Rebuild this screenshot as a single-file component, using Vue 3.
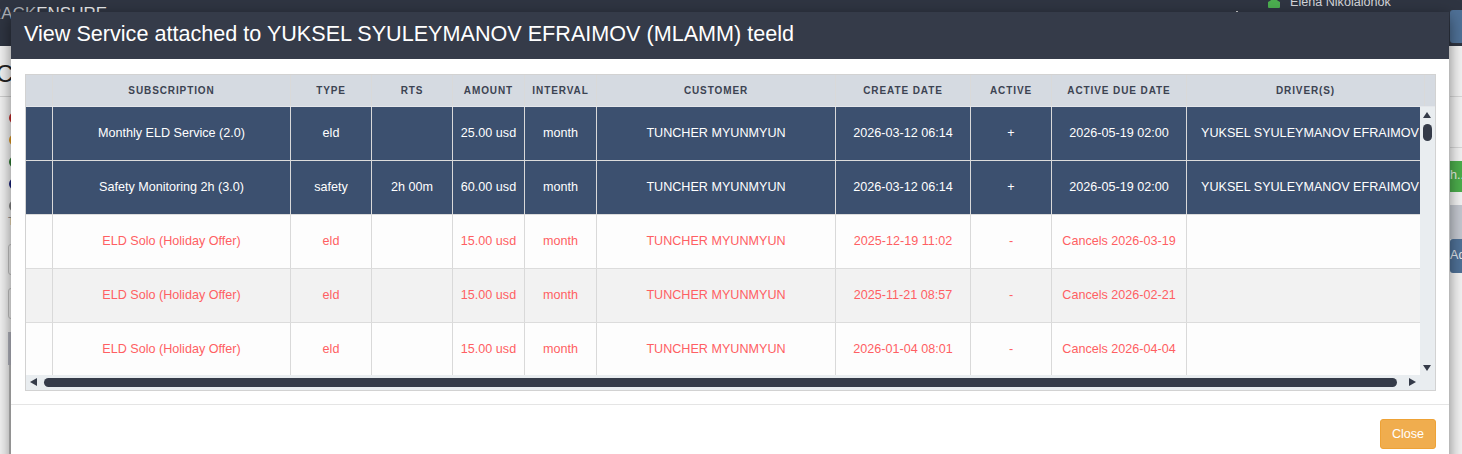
<template>
  <div class="page">
    <!-- page behind the dialog, only its edges stay visible -->
    <div class="behind">
      <div class="navbar">
        <span class="brand"><span class="brand-thin">RACK</span>ENSURE</span>
        <span class="nav-speck"></span>
        <span class="user">
          <svg class="user-icon" width="12" height="12" viewBox="0 0 12 12">
            <path d="M3.5 0h5l.8 4.5L12 6v5a1 1 0 0 1-1 1H1a1 1 0 0 1-1-1V6l2.7-1.5z" fill="#4caf50" />
          </svg>
          Elena Nikolaionok
        </span>
      </div>
      <div class="page-title">Cu</div>
      <div class="left-line"></div>
      <div class="status-dots">
        <span v-for="c in dotColors" :key="c" class="dot" :style="{ borderColor: c }"></span>
      </div>
      <div class="left-t">T</div>
      <div class="left-field left-field--a"></div>
      <div class="left-field left-field--b"></div>
      <div class="left-band"></div>
      <div class="left-rail"></div>
      <div class="side-blue side-blue--top"></div>
      <div class="side-line side-line--a"></div>
      <div class="side-line side-line--b"></div>
      <div class="side-green">h...</div>
      <div class="side-band"></div>
      <div class="side-blue side-blue--ad">Ad</div>
    </div>

    <div class="modal">
      <div class="modal-header">View Service attached to YUKSEL SYULEYMANOV EFRAIMOV (MLAMM) teeld</div>
      <div class="modal-body">
        <div class="table-wrap">
          <div class="row head">
            <div v-for="col in columns" :key="col.key" class="cell" :class="col.key">{{ col.label }}</div>
          </div>
          <div
            v-for="(item, idx) in services"
            :key="idx"
            class="row"
            :class="{ 'row--active': item.on, 'row--odd': !item.on && idx % 2 === 1 }"
          >
            <div v-for="col in columns" :key="col.key" class="cell" :class="col.key">
              <span class="cell-text">{{ item[col.key] }}</span>
            </div>
          </div>
          <div class="vbar">
            <span class="arrow arrow--up"></span>
            <span class="vthumb"></span>
            <span class="arrow arrow--down"></span>
          </div>
          <div class="hbar">
            <span class="arrow arrow--left"></span>
            <span class="hthumb"></span>
            <span class="arrow arrow--right"></span>
          </div>
        </div>
      </div>
      <div class="modal-footer">
        <button class="btn-close" type="button">Close</button>
      </div>
    </div>
  </div>
</template>

<script setup>
const dotColors = ['#c62828', '#e39a1f', '#2e7d32', '#1a237e', '#888888']

const columns = [
  { key: 'sel', label: '' },
  { key: 'sub', label: 'SUBSCRIPTION' },
  { key: 'type', label: 'TYPE' },
  { key: 'rts', label: 'RTS' },
  { key: 'amount', label: 'AMOUNT' },
  { key: 'interval', label: 'INTERVAL' },
  { key: 'customer', label: 'CUSTOMER' },
  { key: 'created', label: 'CREATE DATE' },
  { key: 'active', label: 'ACTIVE' },
  { key: 'due', label: 'ACTIVE DUE DATE' },
  { key: 'drivers', label: 'DRIVER(S)' }
]

const driver = 'YUKSEL SYULEYMANOV EFRAIMOV'
const customer = 'TUNCHER MYUNMYUN'

const services = [
  { on: true, sub: 'Monthly ELD Service (2.0)', type: 'eld', rts: '', amount: '25.00 usd', interval: 'month', customer, created: '2026-03-12 06:14', active: '+', due: '2026-05-19 02:00', drivers: driver },
  { on: true, sub: 'Safety Monitoring 2h (3.0)', type: 'safety', rts: '2h 00m', amount: '60.00 usd', interval: 'month', customer, created: '2026-03-12 06:14', active: '+', due: '2026-05-19 02:00', drivers: driver },
  { on: false, sub: 'ELD Solo (Holiday Offer)', type: 'eld', rts: '', amount: '15.00 usd', interval: 'month', customer, created: '2025-12-19 11:02', active: '-', due: 'Cancels 2026-03-19', drivers: '' },
  { on: false, sub: 'ELD Solo (Holiday Offer)', type: 'eld', rts: '', amount: '15.00 usd', interval: 'month', customer, created: '2025-11-21 08:57', active: '-', due: 'Cancels 2026-02-21', drivers: '' },
  { on: false, sub: 'ELD Solo (Holiday Offer)', type: 'eld', rts: '', amount: '15.00 usd', interval: 'month', customer, created: '2026-01-04 08:01', active: '-', due: 'Cancels 2026-04-04', drivers: '' }
]
</script>

<style>
html,
body {
  margin: 0;
  overflow: hidden;
}
</style>

<style scoped>
.page {
  position: relative;
  width: 1462px;
  height: 454px;
  overflow: hidden;
  font-family: "Liberation Sans", Arial, sans-serif;
}

.behind {
  position: absolute;
  inset: 0;
  background: #f4f4f4;
}

.navbar {
  position: absolute;
  left: 0;
  top: 0;
  right: 0;
  height: 46px;
  background: #2f3542;
  color: #d4d6da;
  font-size: 12.6px;
}

.brand {
  position: absolute;
  left: -11px;
  top: 4px;
  font-size: 17px;
  line-height: 20px;
  color: #e8e9eb;
}

.brand-thin {
  color: #aeb1b8;
}

.nav-speck {
  position: absolute;
  left: 1236px;
  top: 11px;
  width: 2px;
  height: 1px;
  background: #c8c8c8;
}

.user {
  position: absolute;
  left: 1268px;
  top: -5px;
  display: flex;
  align-items: center;
  gap: 10px;
  line-height: 14px;
}

.page-title {
  position: absolute;
  left: -4px;
  top: 60px;
  font-size: 24px;
  color: #222;
}

.left-line {
  position: absolute;
  left: 0;
  top: 96px;
  width: 11px;
  height: 1px;
  background: #d0d0d0;
}

.status-dots {
  position: absolute;
  left: 9px;
  top: 112px;
  display: flex;
  flex-direction: column;
  gap: 10px;
}

.dot {
  box-sizing: border-box;
  width: 12px;
  height: 12px;
  border: 2px solid;
  border-radius: 50%;
}

.left-t {
  position: absolute;
  left: 8px;
  top: 215px;
  font-size: 11px;
  color: #888;
}

.left-field {
  position: absolute;
  left: 8px;
  width: 8px;
  height: 29px;
  border: 1px solid #c4c4c4;
  border-radius: 3px;
}

.left-field--a {
  top: 244px;
}

.left-field--b {
  top: 288px;
}

.left-band {
  position: absolute;
  left: 8px;
  top: 332px;
  width: 8px;
  height: 33px;
  background: #b4b6c0;
}

.left-rail {
  position: absolute;
  left: 9px;
  top: 365px;
  bottom: 0;
  width: 8px;
  background: #c0c0c0;
}

.side-blue {
  position: absolute;
  left: 1450px;
  width: 30px;
  border-radius: 3px;
  background: #4f7197;
  color: #e3e8ee;
  font-size: 12.6px;
}

.side-blue--top {
  top: 10px;
  height: 33px;
}

.side-blue--ad {
  top: 239px;
  height: 34px;
  line-height: 32px;
}

.side-line {
  position: absolute;
  left: 1450px;
  right: 0;
  height: 1px;
  background: #d8d8d8;
}

.side-line--a {
  top: 96px;
}

.side-line--b {
  top: 147px;
}

.side-green {
  position: absolute;
  left: 1450px;
  top: 161px;
  width: 30px;
  height: 31px;
  line-height: 29px;
  background: #4cae4c;
  color: #e6f2e6;
  font-size: 12.6px;
}

.side-band {
  position: absolute;
  left: 1450px;
  right: 0;
  top: 205px;
  height: 34px;
  background: #c4c8d0;
}

.modal {
  position: absolute;
  left: 11px;
  top: 12px;
  width: 1438px;
  height: 460px;
  background: #fff;
  box-shadow: 0 5px 15px rgba(0, 0, 0, 0.5);
}

.modal-header {
  height: 47px;
  padding-left: 13px;
  background: #353b49;
  color: #fff;
  font-size: 21.6px;
  line-height: 44px;
  white-space: nowrap;
}

.modal-body {
  padding: 15px 0 13px 14px;
  border-bottom: 1px solid #e5e5e5;
}

.table-wrap {
  position: relative;
  width: 1409px;
  height: 315px;
  border: 1px solid #d2d2d2;
  overflow: hidden;
  background: #fdfdfd;
}

.row {
  display: flex;
  height: 54px;
  box-sizing: border-box;
  border-bottom: 1px solid #dcdcdc;
  color: #ff5f63;
  font-size: 12.6px;
}

.row.head {
  height: 32px;
  background: #d5dae1;
  border-bottom: 1px solid #e4e6ea;
  color: #3c4352;
  font-size: 10px;
  font-weight: 700;
  letter-spacing: 0.9px;
}

.row--active {
  background: #3c506f;
  color: #fff;
}

.row--odd {
  background: #f2f2f2;
}

.cell {
  display: flex;
  align-items: center;
  justify-content: center;
  flex: none;
  box-sizing: border-box;
  border-right: 1px solid #d9d9d9;
  white-space: nowrap;
  overflow: hidden;
}

.row:not(.head) .cell {
  padding-bottom: 2px;
}

.sel { width: 27px; }
.sub { width: 238px; }
.type { width: 81px; }
.rts { width: 81px; }
.amount { width: 72px; }
.interval { width: 72px; }
.customer { width: 239px; }
.created { width: 135px; }
.active { width: 81px; }
.due { width: 135px; }
.drivers { width: 238px; }

.row:not(.head) .drivers {
  justify-content: flex-start;
  padding-left: 14px;
  border-right: 0;
}

.vbar {
  position: absolute;
  right: 0;
  top: 32px;
  bottom: 0;
  width: 15px;
  background: #e9edf0;
}

.hbar {
  position: absolute;
  left: 0;
  right: 0;
  bottom: 0;
  height: 15px;
  background: #e9edf0;
}

.vthumb {
  position: absolute;
  left: 3px;
  top: 17px;
  width: 9px;
  height: 17px;
  border-radius: 5px;
  background: #353b49;
}

.hthumb {
  position: absolute;
  left: 18px;
  top: 3px;
  width: 1353px;
  height: 9px;
  border-radius: 5px;
  background: #353b49;
}

.arrow {
  position: absolute;
  width: 0;
  height: 0;
  border-style: solid;
  border-color: transparent;
}

.arrow--up {
  left: 3px;
  top: 5px;
  border-width: 0 4.5px 6px;
  border-bottom-color: #353b49;
}

.arrow--down {
  left: 3px;
  bottom: 19px;
  border-width: 6px 4.5px 0;
  border-top-color: #353b49;
}

.arrow--left {
  left: 4px;
  top: 3px;
  border-width: 4.5px 7px 4.5px 0;
  border-right-color: #353b49;
}

.arrow--right {
  right: 19px;
  top: 3px;
  border-width: 4.5px 0 4.5px 7px;
  border-left-color: #353b49;
}

.modal-footer {
  display: flex;
  justify-content: flex-end;
  padding: 14px 13px;
}

.btn-close {
  width: 56px;
  height: 30px;
  padding: 0;
  border: 1px solid #eea236;
  border-radius: 3px;
  background: #f0ad4e;
  color: #fff;
  font-family: inherit;
  font-size: 12.6px;
}
</style>
